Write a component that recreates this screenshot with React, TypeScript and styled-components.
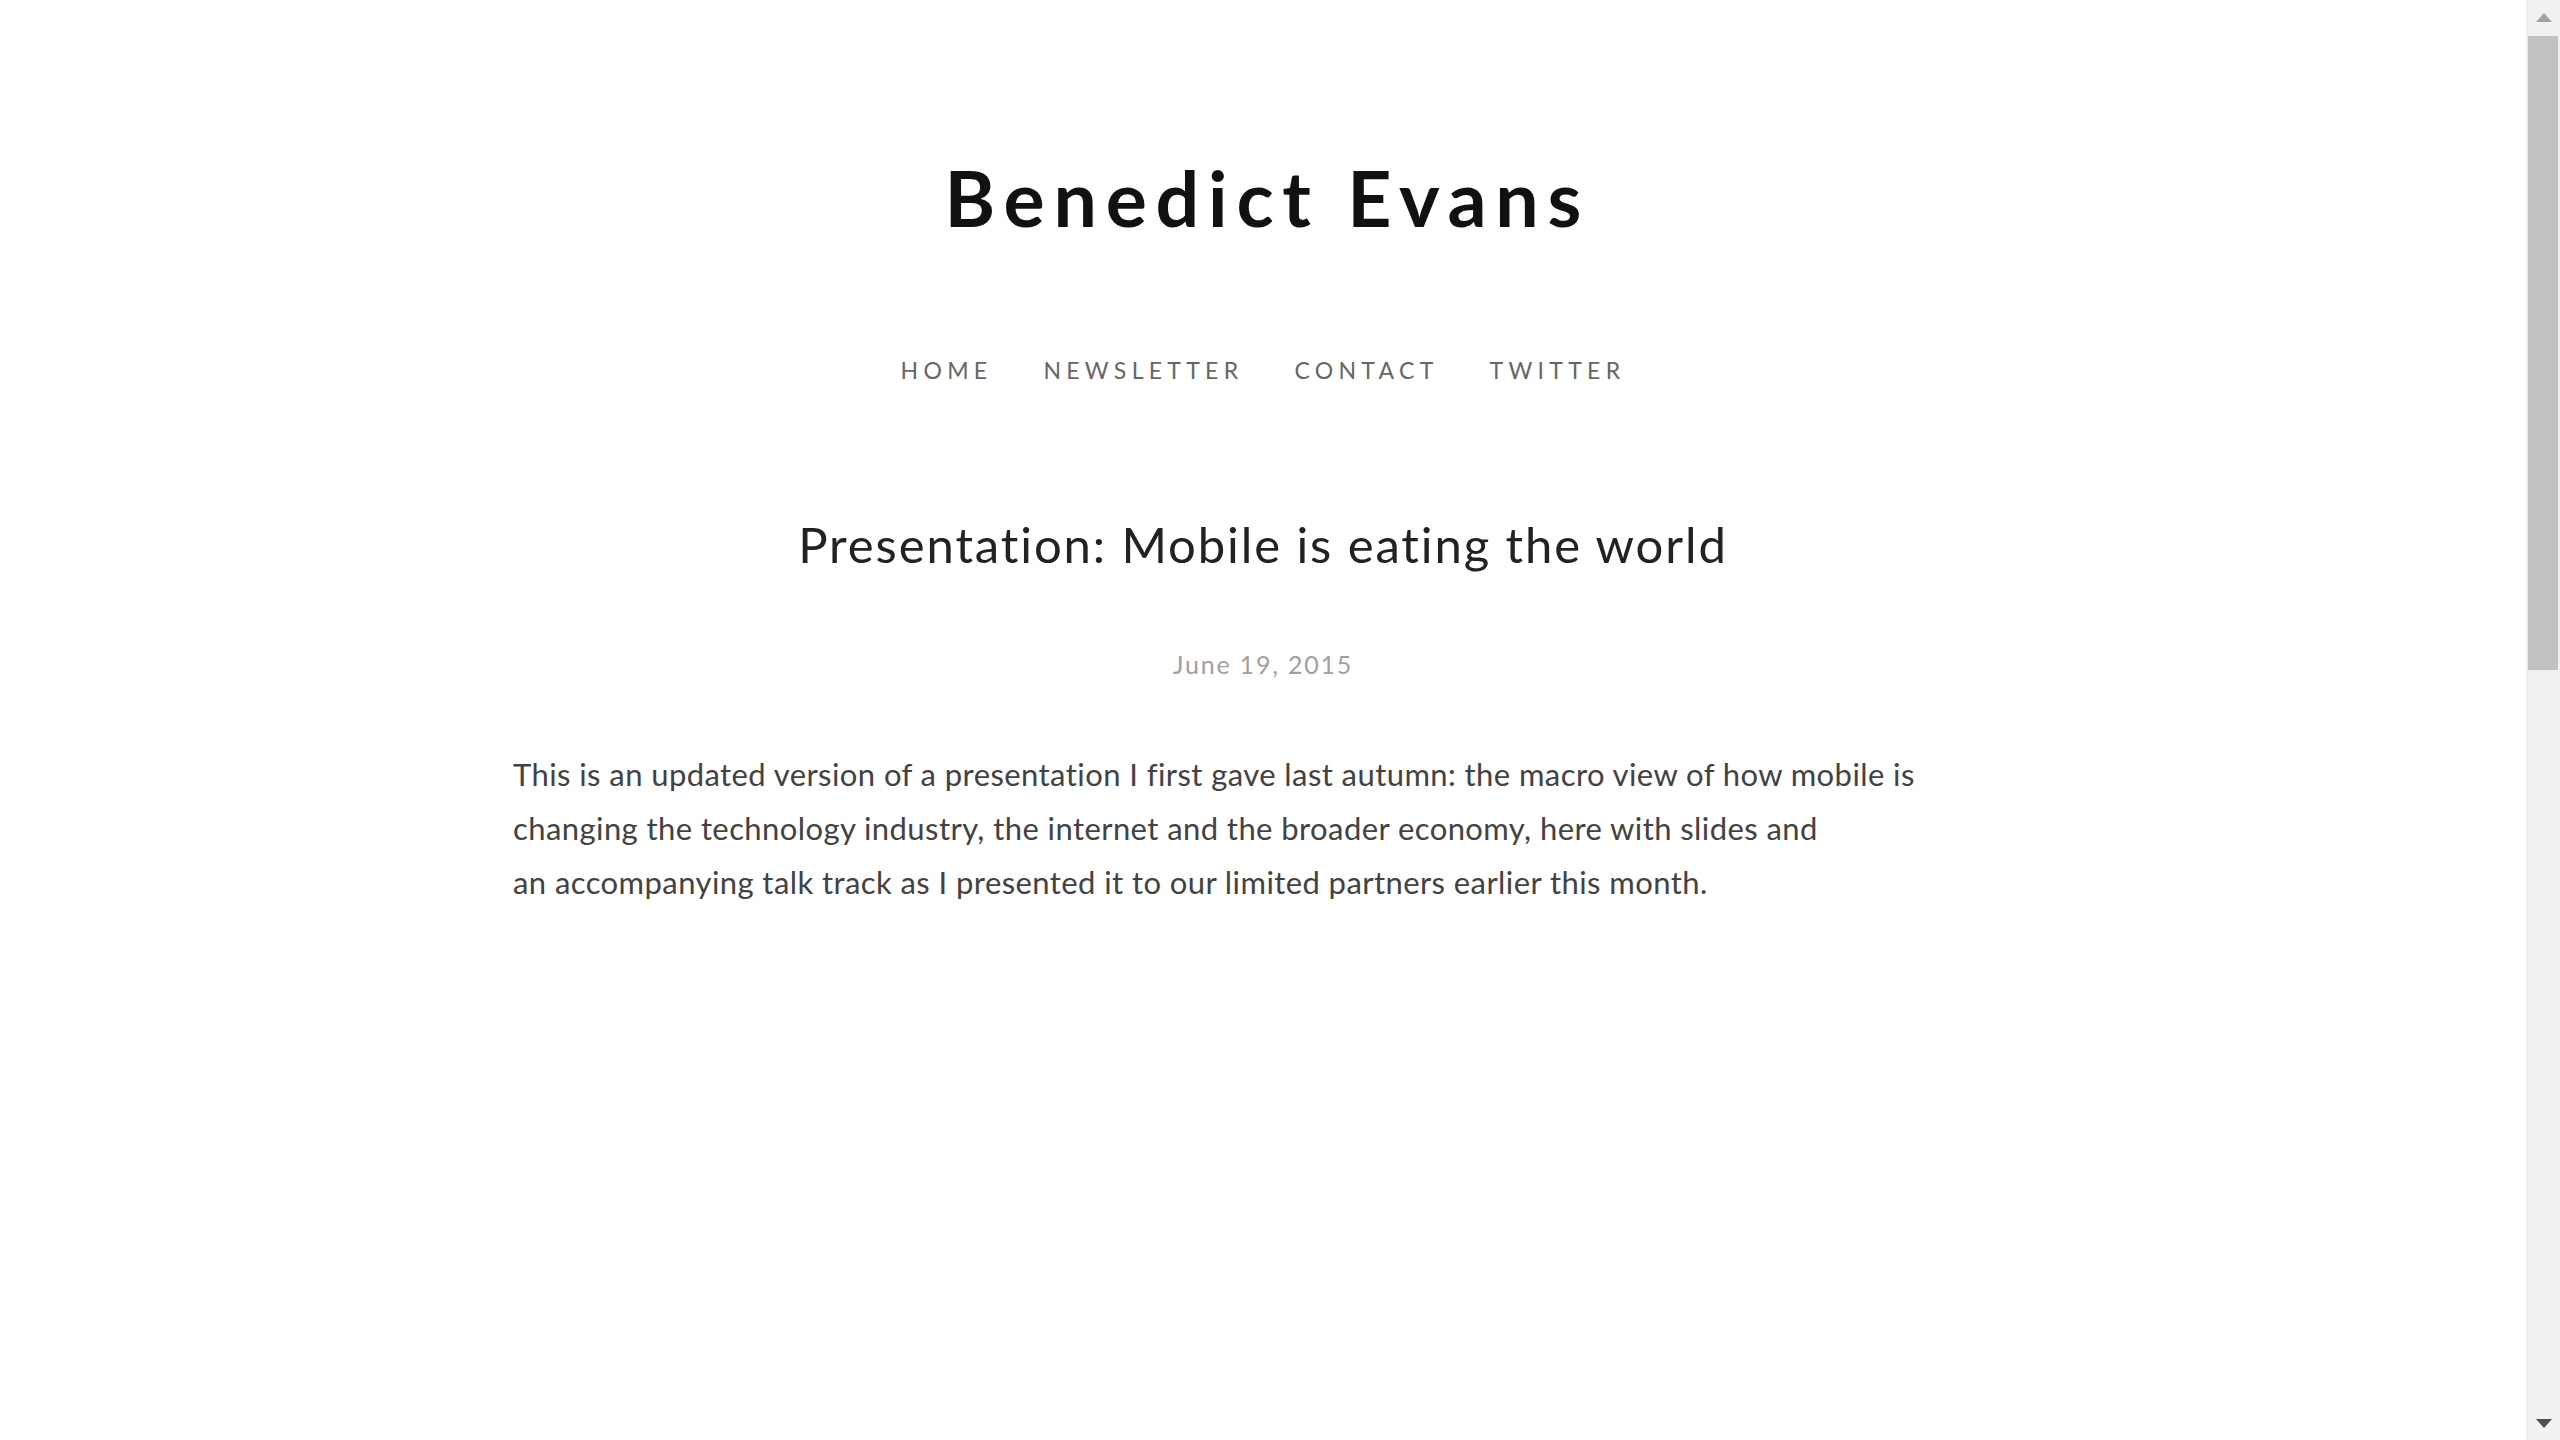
import React from "react";
import styled, { createGlobalStyle } from "styled-components";

const GlobalStyle = createGlobalStyle`
  html, body {
    margin: 0;
    padding: 0;
    background: #ffffff;
    font-family: Lato, "Open Sans", "Liberation Sans", sans-serif;
  }
`;

const Page = styled.div`
  box-sizing: border-box;
  min-height: 3117px;
  padding-right: 34px;
  display: flex;
  flex-direction: column;
  align-items: center;
`;

const Header = styled.header`
  display: flex;
  flex-direction: column;
  align-items: center;
  padding-top: 159px;
`;

const SiteTitle = styled.h1`
  margin: 0;
  font-size: 77px;
  line-height: 1;
  font-weight: 700;
  letter-spacing: 8.8px;
  text-indent: 8.8px;
  color: #111111;
`;

const Nav = styled.nav`
  display: flex;
  gap: 51px;
  margin-top: 123px;
`;

const NavLink = styled.a`
  font-size: 23px;
  line-height: 1;
  letter-spacing: 5.3px;
  text-transform: uppercase;
  color: #666666;
  text-decoration: none;
`;

const Article = styled.article`
  width: 1500px;
  display: flex;
  flex-direction: column;
  align-items: center;
  margin-top: 138px;
`;

const PostTitle = styled.h2`
  margin: 0;
  font-size: 49px;
  line-height: 1;
  font-weight: 400;
  letter-spacing: 1.9px;
  color: #222222;
`;

const PostDate = styled.time`
  margin-top: 83px;
  font-size: 25px;
  line-height: 1;
  letter-spacing: 1.8px;
  color: #a0a0a0;
`;

const Body = styled.p`
  align-self: stretch;
  margin: 70px 0 0;
  font-size: 31px;
  line-height: 54px;
  letter-spacing: 0.42px;
  color: #424242;
`;

const Scrollbar = styled.div`
  position: fixed;
  top: 0;
  right: 0;
  width: 34px;
  height: 100vh;
  display: flex;
  flex-direction: column;
  background: #f1f1f1;
  border-left: 1px solid #e9e9e9;
  box-sizing: border-box;
`;

const ScrollButton = styled.div`
  height: 34px;
  flex: none;
  display: flex;
  align-items: center;
  justify-content: center;
`;

const Track = styled.div`
  flex: 1;
  padding: 2px 2px 0 1px;
`;

const Thumb = styled.div`
  height: 634px;
  background: #c1c1c1;
`;

function Arrow({ up, color }: { up?: boolean; color: string }) {
  return (
    <svg width="16" height="9" viewBox="0 0 16 9">
      <polygon points={up ? "8,0 16,9 0,9" : "0,0 16,0 8,9"} fill={color} />
    </svg>
  );
}

export default function App() {
  return (
    <>
      <GlobalStyle />
      <Page>
        <Header>
          <SiteTitle>Benedict Evans</SiteTitle>
          <Nav>
            <NavLink href="#">Home</NavLink>
            <NavLink href="#">Newsletter</NavLink>
            <NavLink href="#">Contact</NavLink>
            <NavLink href="#">Twitter</NavLink>
          </Nav>
        </Header>
        <Article>
          <PostTitle>Presentation: Mobile is eating the world</PostTitle>
          <PostDate>June 19, 2015</PostDate>
          <Body>
            This is an updated version of a presentation I first gave last autumn: the macro view of how mobile is changing the technology industry, the internet and the broader economy, here with slides and an{"\u00a0"}accompanying talk track as I presented it to our limited partners earlier this month.
          </Body>
        </Article>
      </Page>
      <Scrollbar>
        <ScrollButton>
          <Arrow up color="#a3a3a3" />
        </ScrollButton>
        <Track>
          <Thumb />
        </Track>
        <ScrollButton>
          <Arrow color="#505050" />
        </ScrollButton>
      </Scrollbar>
    </>
  );
}
